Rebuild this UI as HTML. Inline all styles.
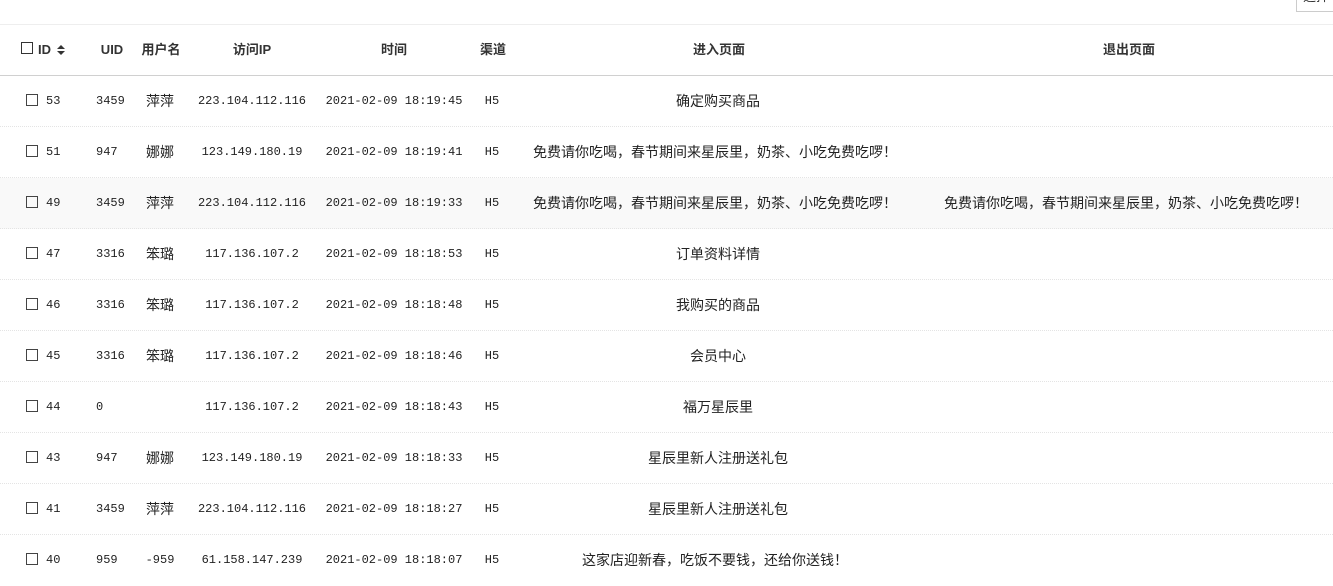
<!DOCTYPE html>
<html><head><meta charset="utf-8"><style>
*{margin:0;padding:0;box-sizing:border-box}
body{width:1333px;height:584px;overflow:hidden;background:#fff;position:relative;font-family:"Liberation Mono","Noto Sans CJK SC",monospace;color:#222;font-size:12px}
.btn{position:absolute;left:1296px;top:-12px;width:50px;height:24px;border:1px solid #ccc;background:#fff;font:13px "Liberation Sans","Noto Sans CJK SC",sans-serif;padding:0 0 0 6px;line-height:16px;color:#333}
.hd{position:absolute;top:24px;height:52px;width:1333px;border-top:1px solid #eee;border-bottom:1px solid #d0d0d0}
.h{position:absolute;top:17px;font:bold 13px/16px "Liberation Sans","Noto Sans CJK SC",sans-serif;color:#333;transform:translateX(-50%);white-space:nowrap}
.row{position:absolute;left:0;width:1333px;height:51px;border-bottom:1px dotted #e4e4e4}
.c{position:absolute;top:17px;white-space:nowrap;transform:translateX(-50%);line-height:16px}
.l{position:absolute;top:17px;white-space:nowrap;line-height:16px}
.cb{position:absolute;left:26px;top:18px;width:12px;height:12px;border:1px solid #444}
.zh{font-family:"Liberation Sans","Noto Sans CJK SC",sans-serif;font-size:14px}
</style></head><body>
<div class="btn">选择</div>
<div class="hd">
<div style="position:absolute;left:21px;top:17px;width:12px;height:12px;border:1px solid #333"></div>
<div class="h" style="left:38px;transform:none">ID</div>
<div style="position:absolute;left:56px;top:19px;font-size:0"><svg width="10" height="12"><path d="M1 5L5 1L9 5Z M1 7L5 11L9 7Z" fill="#333"/></svg></div>
<div class="h" style="left:112px">UID</div>
<div class="h" style="left:161px">用户名</div>
<div class="h" style="left:252px">访问IP</div>
<div class="h" style="left:394px">时间</div>
<div class="h" style="left:493px">渠道</div>
<div class="h" style="left:719px">进入页面</div>
<div class="h" style="left:1129px">退出页面</div>
</div>

<div class="row" style="top:76px"><div class="cb"></div><div class="l" style="left:46px">53</div><div class="l" style="left:96px">3459</div><div class="c zh" style="left:160px">萍萍</div><div class="c" style="left:252px">223.104.112.116</div><div class="c" style="left:394px">2021-02-09 18:19:45</div><div class="c" style="left:492px">H5</div><div class="c zh" style="left:718px">确定购买商品</div></div>
<div class="row" style="top:127px"><div class="cb"></div><div class="l" style="left:46px">51</div><div class="l" style="left:96px">947</div><div class="c zh" style="left:160px">娜娜</div><div class="c" style="left:252px">123.149.180.19</div><div class="c" style="left:394px">2021-02-09 18:19:41</div><div class="c" style="left:492px">H5</div><div class="c zh" style="left:715px">免费请你吃喝，春节期间来星辰里，奶茶、小吃免费吃啰！</div></div>
<div class="row" style="top:178px;background:#f9f9f9"><div class="cb"></div><div class="l" style="left:46px">49</div><div class="l" style="left:96px">3459</div><div class="c zh" style="left:160px">萍萍</div><div class="c" style="left:252px">223.104.112.116</div><div class="c" style="left:394px">2021-02-09 18:19:33</div><div class="c" style="left:492px">H5</div><div class="c zh" style="left:715px">免费请你吃喝，春节期间来星辰里，奶茶、小吃免费吃啰！</div><div class="c zh" style="left:1126px">免费请你吃喝，春节期间来星辰里，奶茶、小吃免费吃啰！</div></div>
<div class="row" style="top:229px"><div class="cb"></div><div class="l" style="left:46px">47</div><div class="l" style="left:96px">3316</div><div class="c zh" style="left:160px">笨璐</div><div class="c" style="left:252px">117.136.107.2</div><div class="c" style="left:394px">2021-02-09 18:18:53</div><div class="c" style="left:492px">H5</div><div class="c zh" style="left:718px">订单资料详情</div></div>
<div class="row" style="top:280px"><div class="cb"></div><div class="l" style="left:46px">46</div><div class="l" style="left:96px">3316</div><div class="c zh" style="left:160px">笨璐</div><div class="c" style="left:252px">117.136.107.2</div><div class="c" style="left:394px">2021-02-09 18:18:48</div><div class="c" style="left:492px">H5</div><div class="c zh" style="left:718px">我购买的商品</div></div>
<div class="row" style="top:331px"><div class="cb"></div><div class="l" style="left:46px">45</div><div class="l" style="left:96px">3316</div><div class="c zh" style="left:160px">笨璐</div><div class="c" style="left:252px">117.136.107.2</div><div class="c" style="left:394px">2021-02-09 18:18:46</div><div class="c" style="left:492px">H5</div><div class="c zh" style="left:718px">会员中心</div></div>
<div class="row" style="top:382px"><div class="cb"></div><div class="l" style="left:46px">44</div><div class="l" style="left:96px">0</div><div class="c" style="left:252px">117.136.107.2</div><div class="c" style="left:394px">2021-02-09 18:18:43</div><div class="c" style="left:492px">H5</div><div class="c zh" style="left:718px">福万星辰里</div></div>
<div class="row" style="top:433px"><div class="cb"></div><div class="l" style="left:46px">43</div><div class="l" style="left:96px">947</div><div class="c zh" style="left:160px">娜娜</div><div class="c" style="left:252px">123.149.180.19</div><div class="c" style="left:394px">2021-02-09 18:18:33</div><div class="c" style="left:492px">H5</div><div class="c zh" style="left:718px">星辰里新人注册送礼包</div></div>
<div class="row" style="top:484px"><div class="cb"></div><div class="l" style="left:46px">41</div><div class="l" style="left:96px">3459</div><div class="c zh" style="left:160px">萍萍</div><div class="c" style="left:252px">223.104.112.116</div><div class="c" style="left:394px">2021-02-09 18:18:27</div><div class="c" style="left:492px">H5</div><div class="c zh" style="left:718px">星辰里新人注册送礼包</div></div>
<div class="row" style="top:535px;border:0"><div class="cb"></div><div class="l" style="left:46px">40</div><div class="l" style="left:96px">959</div><div class="c" style="left:160px">-959</div><div class="c" style="left:252px">61.158.147.239</div><div class="c" style="left:394px">2021-02-09 18:18:07</div><div class="c" style="left:492px">H5</div><div class="c zh" style="left:715px">这家店迎新春，吃饭不要钱，还给你送钱！</div></div>
</body></html>
